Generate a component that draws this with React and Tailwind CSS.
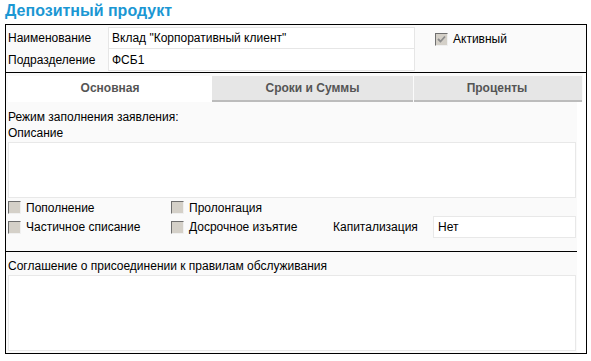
import React from "react";

function Box({ checked }) {
  return (
    <span className="inline-flex w-[13px] h-[13px] shrink-0 items-center justify-center bg-[#d4d0c8] border border-t-[#6f6f6f] border-l-[#6f6f6f] border-r-[#f0f0f0] border-b-[#f0f0f0]">
      {checked && (
        <svg width="9" height="9" viewBox="0 0 9 9">
          <path d="M1 4 L3.5 6.5 L8 1.5" stroke="#8c8c8c" strokeWidth="1.8" fill="none" />
        </svg>
      )}
    </span>
  );
}

function Check({ label, checked, className = "" }) {
  return (
    <div className={"flex items-center gap-[5px] " + className}>
      <Box checked={checked} />
      <span>{label}</span>
    </div>
  );
}

export default function App() {
  return (
    <div className="w-[591px] h-[361px] bg-white text-[12px] leading-[16px] text-black" style={{ fontFamily: '"Liberation Sans", Arial, sans-serif' }}>
      <div className="pl-[5px] h-[24px] pt-[1px] text-[16px] leading-[20px] font-bold text-[#1b97d3]">Депозитный продукт</div>
      <div className="ml-[5px] w-[582px] h-[330px] border border-black bg-white flex flex-col">
        {/* header */}
        <div className="h-[48px] border-b border-black bg-[#fafafa] flex pt-[2px] pl-[2px]">
          <div className="flex flex-col">
            <div className="flex h-[22px]">
              <div className="w-[100px] flex items-center">Наименование</div>
              <div className="w-[307px] h-[22px] border border-[#e6e6e6] bg-white flex items-center pl-[3px]">Вклад "Корпоративный клиент"</div>
            </div>
            <div className="flex h-[22px]">
              <div className="w-[100px] flex items-center">Подразделение</div>
              <div className="w-[307px] h-[22px] border border-t-0 border-[#e6e6e6] bg-white flex items-center pl-[3px]">ФСБ1</div>
            </div>
          </div>
          <Check label="Активный" checked className="ml-[20px] h-[22px] mt-[1px]" />
        </div>
        {/* tabs */}
        <div className="flex pt-[3px] pl-[2px] bg-[#fafafa] w-[577px]">
          <div className="w-[204px] h-[26px] bg-white flex items-center justify-center font-bold text-[#555] border-b-2 border-white">Основная</div>
          <div className="w-[201px] h-[26px] bg-[#e6e6e6] flex items-center justify-center font-bold text-[#555] border-b-2 border-[#bcbcbc] mr-[1px]">Сроки и Суммы</div>
          <div className="w-[168px] h-[26px] bg-[#e6e6e6] flex items-center justify-center font-bold text-[#555] border-b-2 border-[#bcbcbc] mr-[-4px] pr-[2px]">Проценты</div>
        </div>
        {/* content */}
        <div className="w-[571px] flex-1 bg-[#fafafa] flex flex-col">
          <div className="pl-[2px] pt-[7px]">
            <div className="h-[16px]">Режим заполнения заявления:</div>
            <div className="h-[16px]">Описание</div>
            <div className="h-[56px] w-[568px] border border-[#e8e8e8] bg-white mt-[1px]" />
            <div className="flex h-[17px] items-center mt-[1px]">
              <Check label="Пополнение" className="w-[163px]" />
              <Check label="Пролонгация" />
            </div>
            <div className="flex h-[22px] items-center">
              <Check label="Частичное списание" className="w-[163px]" />
              <Check label="Досрочное изъятие" className="w-[162px]" />
              <span className="w-[100px]">Капитализация</span>
              <div className="w-[143px] h-[22px] border border-[#e8e8e8] bg-white flex items-center pl-[4px]">Нет</div>
            </div>
          </div>
          <div className="mt-[13px] border-t border-black" />
          <div className="pl-[2px] pt-[6px]">
            <div className="h-[16px]">Соглашение о присоединении к правилам обслуживания</div>
            <div className="h-[76px] w-[568px] border border-[#e8e8e8] bg-white mt-[1px]" />
          </div>
        </div>
      </div>
    </div>
  );
}
